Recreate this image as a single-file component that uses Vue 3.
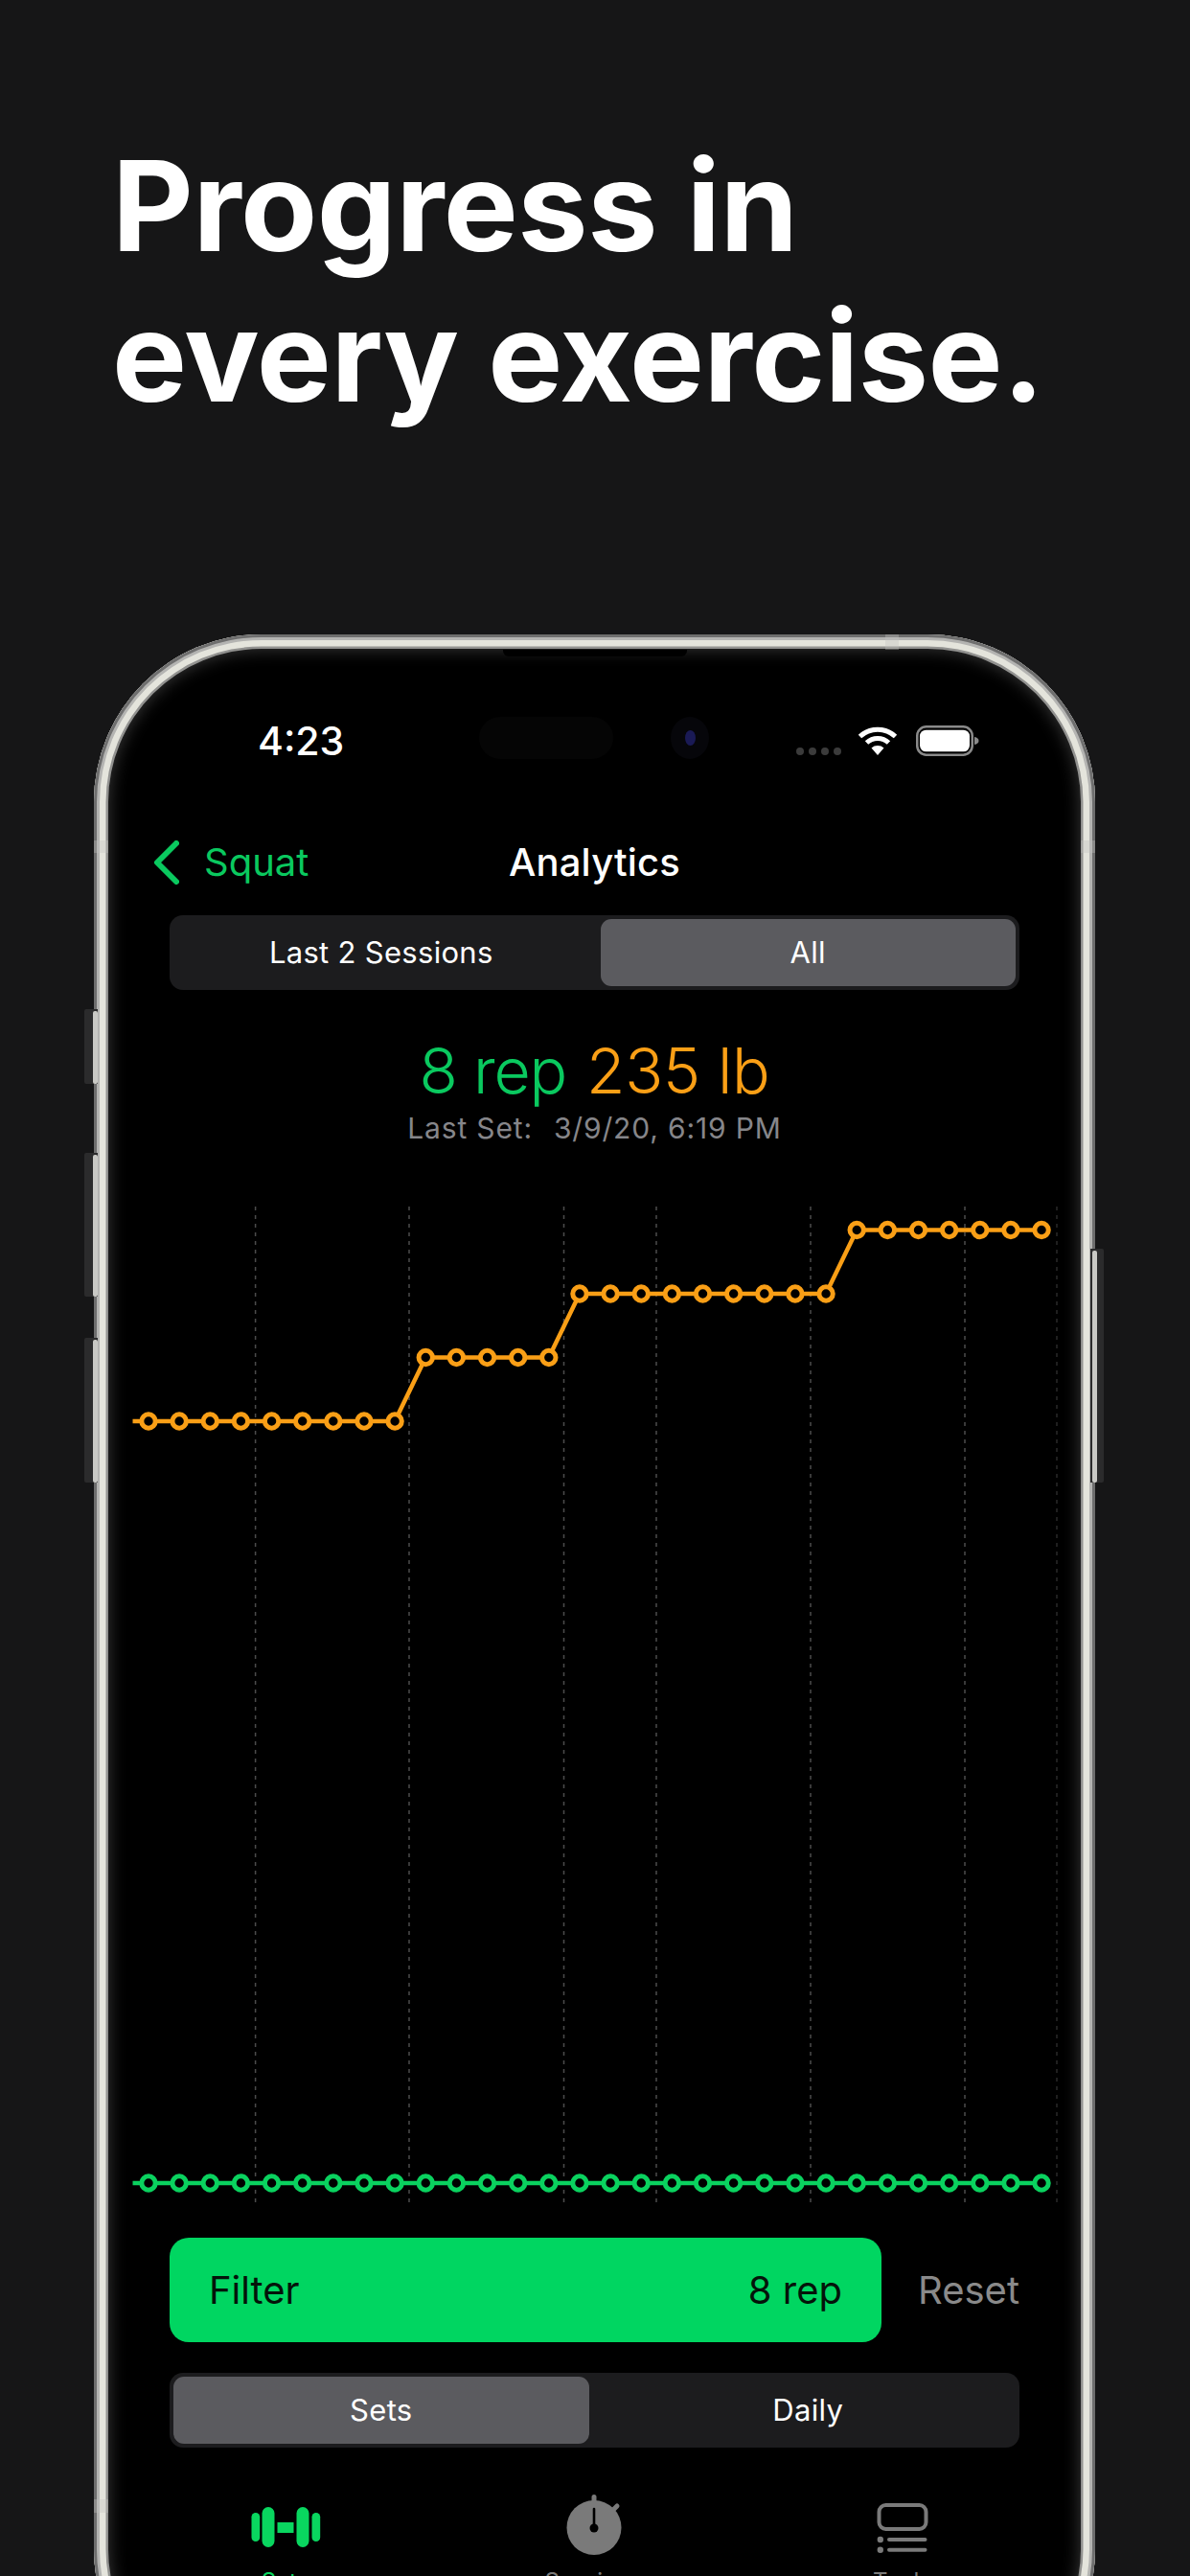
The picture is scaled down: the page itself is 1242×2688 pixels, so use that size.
<script setup>
const gridXs = [266.6, 427, 588.5, 685, 846, 1007]
const pts = Array.from({ length: 30 }, (_, i) => {
  const x = 155 + i * 32.14
  const y = i < 9 ? 1483 : i < 14 ? 1416.5 : i < 23 ? 1350 : 1283.5
  return { x, y }
})
const orangeLine = '138.5,1483 ' + pts.map((p) => `${p.x},${p.y}`).join(' ')
const sideButtons = [
  { name: 'mute', cls: 'left b1' },
  { name: 'up', cls: 'left b2' },
  { name: 'down', cls: 'left b3' },
  { name: 'power', cls: 'right b4' }
]
</script>

<template>
  <div class="page">
    <h1 class="headline">Progress in<br />every exercise.</h1>

    <div class="device">
      <div v-for="b in sideButtons" :key="b.name" class="side" :class="b.cls"></div>
      <i class="seam s1"></i><i class="seam s2"></i><i class="seam s3"></i><i class="seam s4"></i>
      <div class="speaker"></div>

      <div class="status">
        <div class="time">4:23</div>
        <div class="island"></div>
        <div class="camera"><span></span></div>
        <div class="signal"><span></span><span></span><span></span><span></span></div>
        <svg class="wifi" width="42" height="30" viewBox="0 0 42 30">
          <path d="M2.5 10.5A27 27 0 0 1 39.5 10.5" fill="none" stroke="#fff" stroke-width="5" />
          <path d="M9.5 17A17 17 0 0 1 32.5 17" fill="none" stroke="#fff" stroke-width="5" />
          <path d="M21 30L14.5 22.5A10 10 0 0 1 27.5 22.5Z" fill="#fff" />
        </svg>
        <svg class="battery" width="66" height="32" viewBox="0 0 66 32">
          <rect x="1.25" y="1.25" width="57.5" height="29.5" rx="9.5" fill="none" stroke="#8a8a8a" stroke-width="2.5" />
          <rect x="4" y="4.7" width="52" height="22.6" rx="6.5" fill="#fff" />
          <path d="M61 12c3 .6 4.5 2 4.5 4s-1.500 3.400-4.500 4z" fill="#8a8a8a" />
        </svg>
      </div>

      <div class="nav">
        <div class="back">
          <svg width="27" height="46" viewBox="0 0 27 46">
            <path d="M24 3L4 23L24 43" fill="none" stroke="#0ac95f" stroke-width="6" stroke-linecap="round" stroke-linejoin="round" />
          </svg>
          <span>Squat</span>
        </div>
        <div class="title">Analytics</div>
        <div></div>
      </div>

      <div class="seg seg-top">
        <div class="pill">Last 2 Sessions</div>
        <div class="pill on">All</div>
      </div>

      <div class="stats">
        <span class="green">8 rep</span>
        <span class="orange">235 lb</span>
      </div>
      <div class="sub"><span>Last Set:</span><span>3/9/20, 6:19 PM</span></div>

      <svg class="chart" width="1045" height="1070" viewBox="98 1250 1045 1070">
        <line v-for="x in gridXs" :key="x" :x1="x" :x2="x" y1="1259" y2="2303" stroke="#4c4c4c" stroke-width="1.5" stroke-dasharray="4 5" />
        <line x1="1103" x2="1103" y1="1259" y2="2303" stroke="#2a2a2a" stroke-width="1.5" stroke-dasharray="4 5" />
        <polyline :points="orangeLine" fill="none" stroke="#fa9f16" stroke-width="4.5" />
        <circle v-for="p in pts" :key="'o' + p.x" :cx="p.x" :cy="p.y" r="7.2" fill="#000" stroke="#fa9f16" stroke-width="5" />
        <line x1="138.5" x2="1087" y1="2278" y2="2278" stroke="#0ad25f" stroke-width="4.5" />
        <circle v-for="p in pts" :key="'g' + p.x" :cx="p.x" cy="2278" r="7.2" fill="#000" stroke="#0ad25f" stroke-width="5" />
      </svg>

      <div class="actions">
        <div class="filter"><span>Filter</span><span>8 rep</span></div>
        <div class="reset">Reset</div>
      </div>

      <div class="seg seg-bottom">
        <div class="pill on">Sets</div>
        <div class="pill">Daily</div>
      </div>

      <div class="tabs">
        <div class="tab active">
          <svg width="80" height="66" viewBox="0 0 80 66" fill="#09d65f">
            <rect x="4.500" y="19" width="8.700" height="30" rx="4.300" />
            <rect x="15.500" y="13" width="13" height="42" rx="6.500" />
            <rect x="31.500" y="29" width="17" height="11" />
            <rect x="51.500" y="13" width="13" height="42" rx="6.500" />
            <rect x="67.500" y="19" width="8.700" height="30" rx="4.300" />
          </svg>
          <span>Sets</span>
        </div>
        <div class="tab">
          <svg width="80" height="66" viewBox="0 0 80 66">
            <rect x="37.500" y="0" width="5" height="9" rx="2.500" fill="#7a7a7a" />
            <line x1="59" y1="17" x2="64" y2="12" stroke="#7a7a7a" stroke-width="5" stroke-linecap="round" />
            <circle cx="40" cy="34.500" r="28.500" fill="#7a7a7a" />
            <line x1="40" y1="15" x2="40" y2="35" stroke="#000" stroke-width="2.600" stroke-linecap="round" />
            <circle cx="40" cy="35" r="4.500" fill="#000" />
          </svg>
          <span>Sessions</span>
        </div>
        <div class="tab">
          <svg width="80" height="66" viewBox="0 0 80 66" fill="none" stroke="#7a7a7a" stroke-width="4">
            <rect x="15.500" y="11" width="49" height="25" rx="7" />
            <circle cx="16.800" cy="47" r="3.200" fill="#7a7a7a" stroke="none" />
            <circle cx="16.800" cy="57.700" r="3.200" fill="#7a7a7a" stroke="none" />
            <line x1="26" y1="47" x2="63.500" y2="47" stroke-linecap="round" />
            <line x1="26" y1="57.700" x2="63.500" y2="57.700" stroke-linecap="round" />
          </svg>
          <span>Tools</span>
        </div>
      </div>
    </div>
  </div>
</template>

<style>
html, body { margin: 0; background: #161617; }
</style>

<style scoped>
.page {
  width: 1242px;
  height: 2688px;
  overflow: hidden;
  background: #161617;
  font-family: Inter, "Liberation Sans", sans-serif;
  color: #fff;
}
.headline {
  margin: 0;
  padding: 136px 0 0 117px;
  font-size: 131px;
  line-height: 157px;
  font-weight: 700;
  letter-spacing: -.5px;
}
.device {
  position: relative;
  margin: 212px 0 0 98px;
  width: 1045px;
  height: 2173px;
  border-radius: 175px;
  background: #000;
  box-shadow:
    inset 0 0 0 3px #6e6e6e,
    inset 0 0 0 6px #b4b4b2,
    inset 0 0 0 12.5px #e4e4dc,
    inset 0 0 0 15px #929290,
    inset 0 0 18px 15px #3c3c3c;
}
.side {
  position: absolute;
  width: 14px;
  background: #2b2b2c;
}
.side::after {
  content: "";
  position: absolute;
  top: 2px;
  bottom: 0;
  width: 5px;
  background: #c9c9c5;
  border-radius: 2px;
}
.side.left { left: -10px; border-radius: 2px 0 0 2px; }
.side.left::after { right: 0; }
.side.right { right: -9px; border-radius: 0 2px 2px 0; }
.side.right::after { left: 2px; }
.b1 { top: 391px; height: 78px; }
.b2 { top: 541px; height: 150px; }
.b3 { top: 734px; height: 151px; }
.b4 { top: 641px; height: 244px; }
.seam { position: absolute; background: #c4c4bf; opacity: .35; }
.s1 { left: 826px; top: 0; width: 14px; height: 16px; }
.s2 { left: 0; top: 215px; width: 15px; height: 13px; }
.s3 { right: 0; top: 215px; width: 15px; height: 13px; }
.s4 { left: 0; top: 1946px; width: 15px; height: 14px; }
.speaker {
  position: absolute;
  left: 427px;
  top: 16px;
  width: 192px;
  height: 7px;
  background: #000;
  border-radius: 0 0 6px 6px;
}

.status {
  display: flex;
  align-items: center;
  height: 32px;
  padding: 95px 0 0 171px;
}
.time { width: 231px; font-size: 41px; line-height: 32px; font-weight: 500; }
.island { width: 140px; height: 44px; margin-bottom: 6px; border-radius: 22px; background: #050505; flex: none; }
.camera {
  display: flex;
  align-items: center;
  justify-content: center;
  flex: none;
  width: 40px;
  height: 44px;
  margin: 0 0 6px 60px;
  border-radius: 50%;
  background: #06060a;
}
.camera span { width: 11px; height: 16px; border-radius: 50%; background: #1a1a55; }
.signal { display: flex; gap: 5px; margin: 22px 0 0 91px; flex: none; }
.signal span { width: 8px; height: 8px; border-radius: 50%; background: #3b3b3b; }
.wifi { margin: 0 0 0 17px; flex: none; }
.battery { margin-left: 19px; flex: none; }

.nav {
  display: grid;
  grid-template-columns: 1fr auto 1fr;
  align-items: center;
  height: 60px;
  margin-top: 81px;
  padding: 0 62px;
  font-size: 40px;
  line-height: 60px;
}
.back { display: flex; align-items: center; gap: 26px; color: #0ac95f; }
.back svg { display: block; }
.title { font-weight: 500; letter-spacing: .2px; }

.seg {
  display: flex;
  gap: 12px;
  height: 78px;
  box-sizing: border-box;
  padding: 4px;
  margin: 0 79px;
  border-radius: 14px;
  background: #1c1c1e;
}
.seg-top { margin-top: 25px; }
.seg-bottom { margin-top: 32px; }
.pill {
  flex: 1;
  text-align: center;
  font-size: 31px;
  line-height: 70px;
  letter-spacing: .3px;
  border-radius: 11px;
}
.pill.on { background: #5b5b5f; }

.stats {
  display: flex;
  justify-content: center;
  gap: 21px;
  margin-top: 44px;
  font-size: 66px;
  line-height: 80px;
  font-weight: 300;
}
.green { color: #0ac95f; letter-spacing: -1.2px; }
.orange { color: #fa9f16; letter-spacing: -.3px; }
.sub {
  display: flex;
  justify-content: center;
  gap: 22px;
  margin-top: 2px;
  font-size: 30px;
  line-height: 36px;
  letter-spacing: .85px;
  color: #86868a;
}
.chart { display: block; margin-top: 55px; }

.actions {
  display: flex;
  align-items: center;
  height: 109px;
  margin-top: 15px;
  padding-left: 79px;
  font-size: 40px;
}
.filter {
  display: flex;
  justify-content: space-between;
  align-items: center;
  box-sizing: border-box;
  width: 743px;
  height: 109px;
  padding: 0 41px;
  border-radius: 20px;
  background: #00d661;
  color: #04140a;
}
.reset { margin-left: 38px; color: #8a8a8a; }

.tabs {
  display: grid;
  grid-template-columns: repeat(3, 322px);
  margin: 49px 0 0 38.5px;
}
.tab {
  display: flex;
  flex-direction: column;
  align-items: center;
  color: #7a7a7a;
  font-size: 24px;
  line-height: 30px;
}
.tab svg { display: block; margin-bottom: 10px; }
.tab.active { color: #09d65f; }
</style>
